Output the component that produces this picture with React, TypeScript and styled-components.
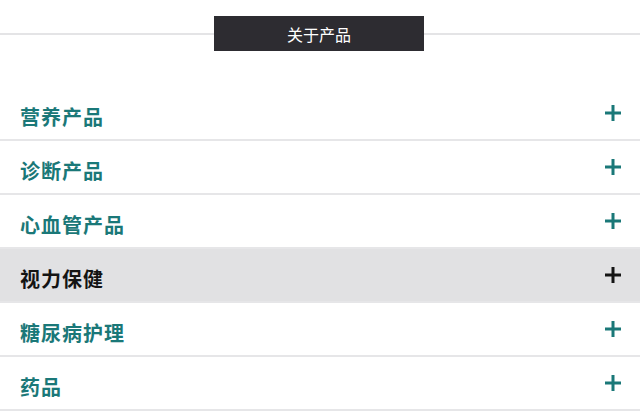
import React from 'react';
import styled, { createGlobalStyle } from 'styled-components';

const GlobalStyle = createGlobalStyle`
    html, body {
        margin: 0;
        padding: 0;
        background: #ffffff;
    }
    body {
        font-family: 'Noto Sans CJK SC', 'Noto Sans', sans-serif;
    }
`;

const Page = styled.div`
    width: 640px;
    height: 411px;
    overflow: hidden;
    background: #ffffff;
`;

const Header = styled.div`
    display: flex;
    align-items: center;
    padding-top: 16px;
    height: 35px;
    margin-bottom: 36px;
`;

const Rule = styled.div<{ $width?: number }>`
    height: 2px;
    background: #e4e4e6;
    flex: ${(p) => (p.$width ? `0 0 ${p.$width}px` : '1')};
`;

const TitleBox = styled.div`
    width: 210px;
    height: 35px;
    background: #2d2c31;
    color: #ffffff;
    font-size: 16px;
    display: flex;
    align-items: center;
    justify-content: center;
`;

const List = styled.div`
    display: flex;
    flex-direction: column;
`;

const Row = styled.div<{ $active?: boolean }>`
    height: 52px;
    display: flex;
    align-items: center;
    justify-content: space-between;
    padding: 0 18px 0 20px;
    border-bottom: 2px solid #e6e6e8;
    background: ${(p) => (p.$active ? '#e1e1e3' : '#ffffff')};
    color: ${(p) => (p.$active ? '#141414' : '#1a7878')};
`;

const Label = styled.span`
    font-size: 20px;
    font-weight: 700;
    padding-top: 6px;
    letter-spacing: 1px;
`;

const Plus = styled.svg`
    width: 18px;
    height: 18px;
    margin-top: -1px;
`;

const items = ['营养产品', '诊断产品', '心血管产品', '视力保健', '糖尿病护理', '药品'];

export default function App() {
    return (
        <Page>
            <GlobalStyle />
            <Header>
                <Rule $width={214} />
                <TitleBox>关于产品</TitleBox>
                <Rule />
            </Header>
            <List>
                {items.map((name) => {
                    const active = name === '视力保健';
                    return (
                        <Row key={name} $active={active}>
                            <Label>{name}</Label>
                            <Plus viewBox="0 0 18 18">
                                <path d="M9 1v16M1 9h16" stroke="currentColor" strokeWidth="3" />
                            </Plus>
                        </Row>
                    );
                })}
            </List>
        </Page>
    );
}
